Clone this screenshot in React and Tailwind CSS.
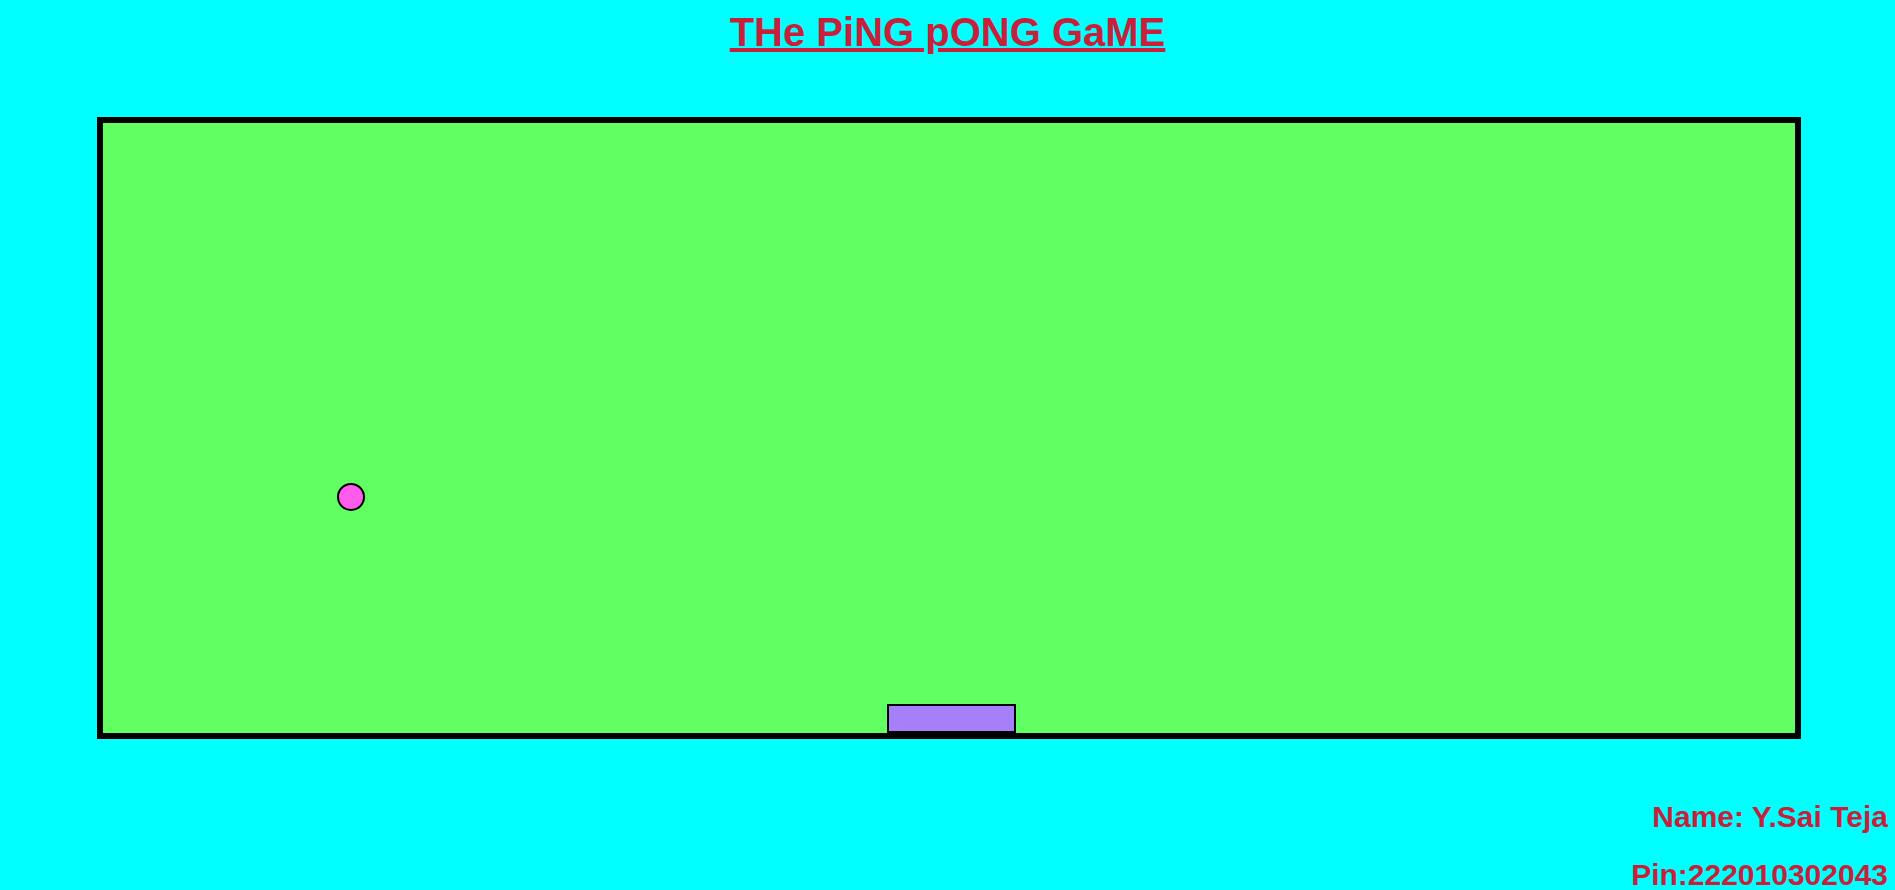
const App = () => {
	return (
		<div
			className="w-[1895px] h-[890px] bg-[#00ffff] overflow-hidden flex flex-col"
			style={{ fontFamily: '"Liberation Sans", Arial, sans-serif' }}
		>
			<h1 className="shrink-0 mt-[9px] text-center text-[40px] leading-[46px] font-bold text-[#c91f3b] underline">
				THe PiNG pONG GaME
			</h1>
			<div className="shrink-0 mt-[62px] ml-[97px] w-[1704px] h-[622px] border-[6px] border-black bg-[#62ff62] flex flex-col">
				<div className="flex-1 pt-[360px] pl-[234px]">
					<div className="w-[28px] h-[28px] rounded-full border-2 border-black bg-[#ff5cec]"></div>
				</div>
				<div className="shrink-0 h-[29px] ml-[784px] w-[129px] border-2 border-black bg-[#a580f8]"></div>
			</div>
			<div className="shrink-0 mt-[61px] pr-[7px] flex flex-col items-end gap-[24px] text-[30px] leading-[34px] font-bold text-[#c91f3b]">
				<div>Name: Y.Sai Teja</div>
				<div>Pin:222010302043</div>
			</div>
		</div>
	);
};

export default App;
